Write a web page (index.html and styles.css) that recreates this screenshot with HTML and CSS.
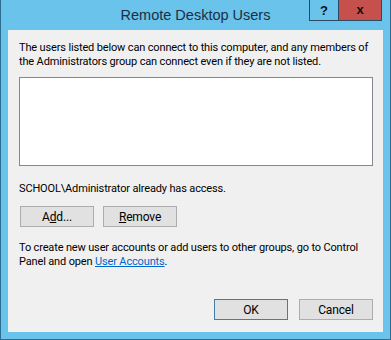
FILE: index.html
```html
<!doctype html>
<html lang="en">

<head>
    <meta charset="utf-8">
    <title>Remote Desktop Users</title>
    <link rel="stylesheet" href="styles.css">
</head>

<body>
    <div class="window">
        <div class="titlebar">
            <span></span>
            <span class="title">Remote Desktop Users</span>
            <div class="caption-buttons">
                <span class="cap help">?</span>
                <span class="cap close">x</span>
            </div>
        </div>

        <div class="client">
            <p class="intro">The users listed below can connect to this computer, and any members of the Administrators group can connect even if they are not listed.</p>

            <div class="listbox"></div>

            <p class="access">SCHOOL\Administrator already has access.</p>

            <div class="row">
                <button type="button" class="btn">A<u>d</u>d...</button>
                <button type="button" class="btn"><u>R</u>emove</button>
            </div>

            <p class="hint">To create new user accounts or add users to other groups, go to Control Panel and open <a href="#">User Accounts</a>.</p>

            <div class="row footer">
                <button type="button" class="btn default">OK</button>
                <button type="button" class="btn">Cancel</button>
            </div>
        </div>
    </div>
</body>

</html>
```

FILE: styles.css
```css
html, body {
    margin: 0;
    padding: 0;
    font-family: Roboto, 'Liberation Sans', Arial, sans-serif;
    font-size: 11px;
    letter-spacing: -0.15px;
    color: #000000;
}

.window {
    box-sizing: border-box;
    width: 391px;
    height: 340px;
    background: #69c3ea;
    border: 1px solid #2b6d94;
    border-top: none;
    padding: 0 7px 7px 7px;
    display: flex;
    flex-direction: column;
}

/* title bar */
.titlebar {
    height: 30px;
    display: grid;
    grid-template-columns: 1fr auto 1fr;
    align-items: start;
}

.title {
    font-family: 'Liberation Sans', Arial, sans-serif;
    font-size: 14.5px;
    letter-spacing: 0;
    line-height: 31px;
    color: #1c2f45;
}

.caption-buttons {
    display: flex;
    justify-content: flex-end;
    margin-right: 1px;
}

.cap {
    box-sizing: border-box;
    height: 21px;
    border: 1px solid #2b4a63;
    border-top: none;
    display: flex;
    align-items: center;
    justify-content: center;
    font-family: 'Liberation Sans', Arial, sans-serif;
    font-weight: bold;
    letter-spacing: 0;
    color: #111111;
}

.cap.help {
    width: 29px;
    border-right: none;
    background: #69c3ea;
    font-size: 13px;
}

.cap.close {
    width: 44px;
    background: #c6504b;
    font-size: 13px;
    padding-bottom: 2px;
}

/* client area */
.client {
    flex: 1;
    background: #f0f0f0;
    padding: 11px 10px 12px 11px;
    display: flex;
    flex-direction: column;
}

.client p {
    margin: 0;
    line-height: 14px;
}

.listbox {
    height: 87px;
    margin-top: 8px;
    background: #ffffff;
    border: 1px solid #828790;
}

.access { margin-top: 16px !important; }

.row {
    display: flex;
    gap: 9px;
    margin-top: 10px;
    padding-left: 1px;
}

.btn {
    box-sizing: border-box;
    width: 74px;
    height: 21px;
    padding: 0;
    background: #e1e1e1;
    border: 1px solid #adadad;
    font-family: inherit;
    font-size: 12px;
    letter-spacing: inherit;
    color: #000000;
}

.hint { margin-top: 14px !important; }

.hint a {
    color: #0066cc;
    text-decoration: underline;
}

.row.footer {
    margin-top: auto;
    justify-content: flex-end;
    gap: 11px;
    padding-left: 0;
}

.btn.default { border-color: #3c7fb1; }
```
